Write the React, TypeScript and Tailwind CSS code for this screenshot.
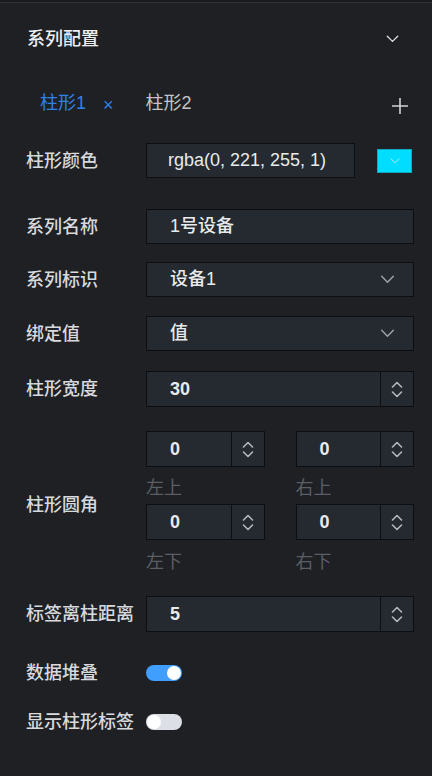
import React from "react";

const FONT = { fontFamily: '"Liberation Sans", "Noto Sans CJK SC", sans-serif' };

function ChevronDown({ className = "" }: { className?: string }) {
  return (
    <svg viewBox="0 0 16 10" className={className} fill="none" stroke="currentColor" strokeWidth="1.6" strokeLinecap="round" strokeLinejoin="round">
      <path d="M1.5 1.5 L8 8 L14.5 1.5" />
    </svg>
  );
}

function Spinner() {
  return (
    <div className="flex h-full w-[33px] shrink-0 flex-col items-center justify-center gap-[3px] border-l border-[#0d0e11] text-[#b4b7bd]">
      <svg viewBox="0 0 12 7" className="h-[7px] w-[12px]" fill="none" stroke="currentColor" strokeWidth="1.6" strokeLinecap="round" strokeLinejoin="round">
        <path d="M1.5 6 L6 1.5 L10.5 6" />
      </svg>
      <svg viewBox="0 0 12 7" className="h-[7px] w-[12px]" fill="none" stroke="currentColor" strokeWidth="1.6" strokeLinecap="round" strokeLinejoin="round">
        <path d="M1.5 1 L6 5.5 L10.5 1" />
      </svg>
    </div>
  );
}

function NumberBox({ value, className = "" }: { value: string; className?: string }) {
  return (
    <div className={`flex h-[36px] items-stretch border border-[#0d0e11] bg-[#252a31] ${className}`}>
      <div className="flex flex-1 items-center pl-[23px] text-[18px] font-bold text-[#e9eaec]">{value}</div>
      <Spinner />
    </div>
  );
}

function Label({ children }: { children: React.ReactNode }) {
  return <div className="w-[120px] shrink-0 text-[18px] font-medium leading-[24px] text-[#d7d9dc]">{children}</div>;
}

function TextBox({ value }: { value: string }) {
  return (
    <div className="flex h-[35px] flex-1 items-center border border-[#0d0e11] bg-[#252a31] pl-[23px] text-[18px] font-medium text-[#e9eaec]">
      {value}
    </div>
  );
}

function SelectBox({ value }: { value: string }) {
  return (
    <div className="flex h-[35px] flex-1 items-center justify-between border border-[#0d0e11] bg-[#252a31] pl-[23px] pr-[18px] text-[18px] font-medium text-[#e9eaec]">
      <span>{value}</span>
      <ChevronDown className="h-[9px] w-[15px] text-[#9ea2a9]" />
    </div>
  );
}

function Toggle({ on }: { on: boolean }) {
  return (
    <div className={`flex h-[16px] w-[36px] items-center rounded-full px-[1px] ${on ? "justify-end bg-[#409eff]" : "justify-start bg-[#dcdfe6]"}`}>
      <div className="h-[14px] w-[14px] rounded-full bg-white" />
    </div>
  );
}

export default function App() {
  return (
    <div className="min-h-[776px] w-[432px] bg-[#1e2024]" style={FONT}>
      <div className="h-[3px] border-b border-[#30333a] bg-[#1a1b1f]" />
      {/* Header */}
      <div className="flex h-[72px] items-center justify-between pl-[27px] pr-[33px]">
        <span className="text-[18px] font-medium text-[#eceef0]">系列配置</span>
        <ChevronDown className="h-[8px] w-[13px] text-[#e0e2e5]" />
      </div>
      {/* Tabs */}
      <div className="flex h-[56px] items-center pl-[40px] pr-[24px]">
        <span className="text-[18px] text-[#2f80e6]">柱形1</span>
        <span className="ml-[17px] mt-[3px] text-[18px] leading-none text-[#2f80e6]">×</span>
        <span className="ml-[32px] text-[18px] text-[#c3c5c9]">柱形2</span>
        <div className="flex-1" />
        <svg viewBox="0 0 16 16" className="mt-[5px] h-[16px] w-[16px] text-[#cfd1d4]" fill="none" stroke="currentColor" strokeWidth="1.6">
          <path d="M8 0 V16 M0 8 H16" />
        </svg>
      </div>

      <div className="px-[26px] pr-[18px]">
        {/* Row 1 */}
        <div className="mt-[12px] flex items-center">
          <Label>柱形颜色</Label>
          <div className="flex h-[35px] w-[209px] items-center border border-[#0d0e11] bg-[#252a31] pl-[21px] text-[18px] text-[#e9eaec]">
            rgba(0, 221, 255, 1)
          </div>
          <div className="ml-[22px] flex h-[24px] w-[35px] items-center justify-center border border-[#10a9c4] bg-[#00ddff]">
            <ChevronDown className="h-[6px] w-[10px] text-[#b8f4ff]" />
          </div>
        </div>
        {/* Row 2 */}
        <div className="mt-[31px] flex items-center">
          <Label>系列名称</Label>
          <TextBox value="1号设备" />
        </div>
        {/* Row 3 */}
        <div className="mt-[18px] flex items-center">
          <Label>系列标识</Label>
          <SelectBox value="设备1" />
        </div>
        {/* Row 4 */}
        <div className="mt-[19px] flex items-center">
          <Label>绑定值</Label>
          <SelectBox value="值" />
        </div>
        {/* Row 5 */}
        <div className="mt-[20px] flex items-center">
          <Label>柱形宽度</Label>
          <NumberBox value="30" className="h-[35px] flex-1" />
        </div>
        {/* Row 6 */}
        <div className="mt-[24px] flex items-center">
          <div className="pt-[6px]">
            <Label>柱形圆角</Label>
          </div>
          <div className="grid flex-1 grid-cols-2 gap-x-[31px]">
            <div className="flex flex-col">
              <NumberBox value="0" />
              <div className="mt-[11px] mb-[6px] h-[20px] text-[18px] leading-[20px] text-[#5b5e64]">左上</div>
            </div>
            <div className="flex flex-col">
              <NumberBox value="0" />
              <div className="mt-[11px] mb-[6px] h-[20px] text-[18px] leading-[20px] text-[#5b5e64]">右上</div>
            </div>
            <div className="flex flex-col">
              <NumberBox value="0" />
              <div className="mt-[12px] h-[20px] text-[18px] leading-[20px] text-[#5b5e64]">左下</div>
            </div>
            <div className="flex flex-col">
              <NumberBox value="0" />
              <div className="mt-[12px] h-[20px] text-[18px] leading-[20px] text-[#5b5e64]">右下</div>
            </div>
          </div>
        </div>
        {/* Row 7 */}
        <div className="mt-[24px] flex items-center">
          <Label>标签离柱距离</Label>
          <NumberBox value="5" className="flex-1" />
        </div>
        {/* Row 8 */}
        <div className="mt-[29px] flex h-[24px] items-center">
          <Label>数据堆叠</Label>
          <Toggle on />
        </div>
        {/* Row 9 */}
        <div className="mt-[25px] flex h-[24px] items-center">
          <Label>显示柱形标签</Label>
          <Toggle on={false} />
        </div>
      </div>
    </div>
  );
}
